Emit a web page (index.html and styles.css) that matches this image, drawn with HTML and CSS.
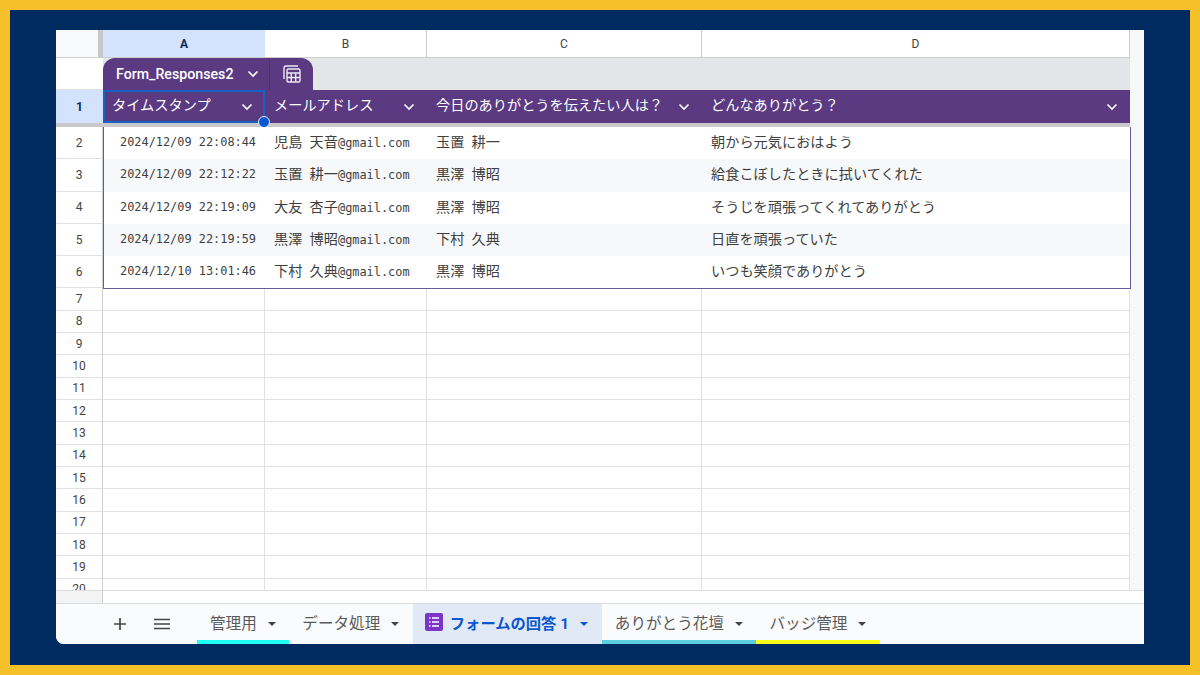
FILE: index.html
```html
<!DOCTYPE html>
<html lang="ja">
<head>
    <meta charset="UTF-8">
    <title>フォームの回答 1</title>
    <link rel="stylesheet" href="styles.css">
</head>
<body>

    <div class="frame">
        <div class="sheet">

            <div class="col-heads">
                <div class="corner"></div>
                <div class="col-head active">A</div>
                <div class="col-head">B</div>
                <div class="col-head">C</div>
                <div class="col-head">D</div>
            </div>

            <div class="table-tab-row">
                <div class="row-num blank"></div>
                <div class="table-tab">
                    <div class="table-name">
                        Form_Responses2
                        <svg class="chev" viewBox="0 0 12 8"><path d="M1.500 1.500 6 6l4.500-4.500"/></svg>
                    </div>
                    <div class="table-icon">
                        <svg viewBox="0 0 18 18" width="18" height="18">
                            <path d="M15 1H3a2 2 0 0 0-2 2v11"/>
                            <rect x="4" y="4" width="13" height="13" rx="1.500"/>
                            <path d="M4 8h13M8.300 8v9M12.700 8v9M4 12.500h13"/>
                        </svg>
                    </div>
                </div>
            </div>

            <div class="grid-row header-row">
                <div class="row-num current">1</div>
                <div class="th"><span class="th-label">タイムスタンプ</span><svg class="chev" viewBox="0 0 12 8"><path d="M1.500 1.500 6 6l4.500-4.500"/></svg></div>
                <div class="th"><span class="th-label">メールアドレス</span><svg class="chev" viewBox="0 0 12 8"><path d="M1.500 1.500 6 6l4.500-4.500"/></svg></div>
                <div class="th"><span class="th-label">今日のありがとうを伝えたい人は？</span><svg class="chev" viewBox="0 0 12 8"><path d="M1.500 1.500 6 6l4.500-4.500"/></svg></div>
                <div class="th"><span class="th-label">どんなありがとう？</span><svg class="chev" viewBox="0 0 12 8"><path d="M1.500 1.500 6 6l4.500-4.500"/></svg></div>
                <div class="selection"><span class="handle"></span></div>
            </div>
            <div class="freeze-line"></div>

            <div class="body-scroll">
                <div class="filled">
                    <div class="grid-row data-row">
                        <div class="row-num">2</div>
                        <div class="td date">2024/12/09 22:08:44</div>
                        <div class="td">児島&ensp;天音<span class="mono">@gmail.com</span></div>
                        <div class="td">玉置&ensp;耕一</div>
                        <div class="td">朝から元気におはよう</div>
                    </div>
                    <div class="grid-row data-row alt">
                        <div class="row-num">3</div>
                        <div class="td date">2024/12/09 22:12:22</div>
                        <div class="td">玉置&ensp;耕一<span class="mono">@gmail.com</span></div>
                        <div class="td">黒澤&ensp;博昭</div>
                        <div class="td">給食こぼしたときに拭いてくれた</div>
                    </div>
                    <div class="grid-row data-row">
                        <div class="row-num">4</div>
                        <div class="td date">2024/12/09 22:19:09</div>
                        <div class="td">大友&ensp;杏子<span class="mono">@gmail.com</span></div>
                        <div class="td">黒澤&ensp;博昭</div>
                        <div class="td">そうじを頑張ってくれてありがとう</div>
                    </div>
                    <div class="grid-row data-row alt">
                        <div class="row-num">5</div>
                        <div class="td date">2024/12/09 22:19:59</div>
                        <div class="td">黒澤&ensp;博昭<span class="mono">@gmail.com</span></div>
                        <div class="td">下村&ensp;久典</div>
                        <div class="td">日直を頑張っていた</div>
                    </div>
                    <div class="grid-row data-row">
                        <div class="row-num">6</div>
                        <div class="td date">2024/12/10 13:01:46</div>
                        <div class="td">下村&ensp;久典<span class="mono">@gmail.com</span></div>
                        <div class="td">黒澤&ensp;博昭</div>
                        <div class="td">いつも笑顔でありがとう</div>
                    </div>
                </div>

                <div class="grid-row empty"><div class="row-num">7</div><div class="td"></div><div class="td"></div><div class="td"></div><div class="td"></div></div>
                <div class="grid-row empty"><div class="row-num">8</div><div class="td"></div><div class="td"></div><div class="td"></div><div class="td"></div></div>
                <div class="grid-row empty"><div class="row-num">9</div><div class="td"></div><div class="td"></div><div class="td"></div><div class="td"></div></div>
                <div class="grid-row empty"><div class="row-num">10</div><div class="td"></div><div class="td"></div><div class="td"></div><div class="td"></div></div>
                <div class="grid-row empty"><div class="row-num">11</div><div class="td"></div><div class="td"></div><div class="td"></div><div class="td"></div></div>
                <div class="grid-row empty"><div class="row-num">12</div><div class="td"></div><div class="td"></div><div class="td"></div><div class="td"></div></div>
                <div class="grid-row empty"><div class="row-num">13</div><div class="td"></div><div class="td"></div><div class="td"></div><div class="td"></div></div>
                <div class="grid-row empty"><div class="row-num">14</div><div class="td"></div><div class="td"></div><div class="td"></div><div class="td"></div></div>
                <div class="grid-row empty"><div class="row-num">15</div><div class="td"></div><div class="td"></div><div class="td"></div><div class="td"></div></div>
                <div class="grid-row empty"><div class="row-num">16</div><div class="td"></div><div class="td"></div><div class="td"></div><div class="td"></div></div>
                <div class="grid-row empty"><div class="row-num">17</div><div class="td"></div><div class="td"></div><div class="td"></div><div class="td"></div></div>
                <div class="grid-row empty"><div class="row-num">18</div><div class="td"></div><div class="td"></div><div class="td"></div><div class="td"></div></div>
                <div class="grid-row empty"><div class="row-num">19</div><div class="td"></div><div class="td"></div><div class="td"></div><div class="td"></div></div>
                <div class="grid-row empty"><div class="row-num">20</div><div class="td"></div><div class="td"></div><div class="td"></div><div class="td"></div></div>
            </div>

            <div class="spacer-row"><div class="spacer-num"></div></div>

            <div class="tab-bar">
                <div class="bar-btn">
                    <svg viewBox="0 0 14 14" width="14" height="14"><path d="M7 1v12M1 7h12"/></svg>
                </div>
                <div class="bar-btn">
                    <svg viewBox="0 0 16 12" width="16" height="12"><path d="M0 1.500h16M0 6h16M0 10.500h16"/></svg>
                </div>
                <div class="tabs">
                    <div class="tab line-cyan">管理用<span class="caret"></span></div>
                    <div class="tab">データ処理<span class="caret"></span></div>
                    <div class="tab selected">
                        <svg class="form-icon" viewBox="0 0 18 18" width="18" height="18">
                            <rect width="18" height="18" rx="2" fill="#7c35c9"/>
                            <path d="M7 5h7M7 9h7M7 13h7M4 5h1.500M4 9h1.500M4 13h1.500" stroke="#fff" stroke-width="1.600"/>
                        </svg>
                        <span class="tab-label">フォームの回答 1</span><span class="caret"></span>
                    </div>
                    <div class="tab line-teal">ありがとう花壇<span class="caret"></span></div>
                    <div class="tab line-yellow">バッジ管理<span class="caret"></span></div>
                </div>
            </div>

        </div>
    </div>

</body>
</html>
```

FILE: styles.css
```css
* {
    box-sizing: border-box;
}

body {
    margin: 0;
    width: 1200px;
    height: 675px;
    overflow: hidden;
    font-family: "Roboto", "Noto Sans CJK JP", sans-serif;
    color: #444;
}

.frame {
    width: 1200px;
    height: 675px;
    padding: 20px 46px 21px;
    background-color: #002b60;
    border: 10px solid #f6c029;
}

.sheet {
    width: 1088px;
    height: 614px;
    display: flex;
    flex-direction: column;
    background-color: #f7f9f8;
    border-bottom-left-radius: 8px;
    overflow: hidden;
}

/* shared column widths, the last 14px is the empty strip on the right */
.col-heads,
.grid-row {
    display: grid;
    grid-template-columns: 47px 162px 162px 275px 428px 14px;
}

.col-heads {
    height: 28px;
}

.corner {
    background-color: #f8f9fa;
    border-right: 5px solid #c7c7c7;
    border-bottom: 1px solid #cfcfcf;
}

.col-head {
    display: flex;
    align-items: center;
    justify-content: center;
    font-size: 12px;
    color: #444;
    background-color: #fff;
    border-right: 1px solid #cfcfcf;
    border-bottom: 1px solid #cfcfcf;
}

.col-head.active {
    background-color: #d3e3fd;
    color: #0b2a58;
    font-weight: 700;
    border-right: none;
}

.table-tab-row {
    height: 32px;
    display: flex;
    background-color: #e4e5e9;
    margin-right: 14px;
}

.row-num {
    display: flex;
    align-items: center;
    justify-content: center;
    font-size: 12px;
    color: #444;
    background-color: #fff;
    border-right: 1px solid #cfcfcf;
    border-bottom: 1px solid #e1e1e1;
}

.row-num.blank {
    width: 47px;
    border-right: none;
}

.row-num.current {
    background-color: #d3e3fd;
    color: #0b2a58;
    font-weight: 700;
    border: none;
}

.table-tab {
    width: 210px;
    display: flex;
    background-color: #5b3a82;
    border-radius: 12px 12px 0 0;
    color: #fff;
}

.table-name {
    width: 167px;
    display: flex;
    align-items: center;
    padding-left: 13px;
    font-size: 14.200px;
    font-weight: 500;
    border-right: 1px solid #4e3172;
}

.table-name .chev {
    margin-left: 14px;
}

.table-icon {
    flex: 1;
    display: flex;
    align-items: center;
    justify-content: center;
}

.table-icon svg {
    fill: none;
    stroke: #eee9f4;
    stroke-width: 1.400;
}

.chev {
    width: 12px;
    height: 8px;
    flex: none;
    fill: none;
    stroke: #fff;
    stroke-width: 1.600;
}

.header-row {
    height: 33px;
    position: relative;
}

.th {
    display: flex;
    align-items: center;
    justify-content: space-between;
    padding: 0 12px 0 9px;
    background-color: #5b3a82;
    color: #fff;
    font-size: 14.200px;
}

.th-label {
    margin-top: -5px;
}

.selection {
    position: absolute;
    left: 47px;
    top: 0;
    width: 162px;
    height: 33px;
    border: 2px solid #1a5fc4;
}

.handle {
    position: absolute;
    right: -7px;
    bottom: -7px;
    width: 12px;
    height: 12px;
    border-radius: 50%;
    background-color: #0b57d0;
    border: 1px solid #e8eefb;
}

.freeze-line {
    height: 4px;
    background-color: #c9c9c9;
    margin-right: 14px;
}

.body-scroll {
    height: 463px;
    overflow: hidden;
}

.filled {
    position: relative;
}

/* the purple outline of the table sits on top of the rows */
.filled::after {
    content: "";
    position: absolute;
    left: 47px;
    top: 0;
    width: 1026px;
    height: 100%;
    border: 1px solid #6a5a98;
    border-top-width: 0;
    pointer-events: none;
}

.data-row {
    height: 32.300px;
}

.data-row .td {
    padding-left: 9px;
    line-height: 31px;
    background-color: #fff;
    font-size: 14.200px;
    color: #3f3f3f;
    white-space: pre;
}

.data-row.alt .td {
    background-color: #f6f8f9;
}

.data-row .td.date {
    font-family: "DejaVu Sans Mono", monospace;
    font-size: 11.900px;
    padding-left: 17px;
}

.mono {
    font-family: "DejaVu Sans Mono", monospace;
    font-size: 11.900px;
}

.empty {
    height: 22.330px;
}

.empty .td {
    background-color: #fff;
    border-right: 1px solid #e1e1e1;
    border-bottom: 1px solid #e1e1e1;
}

.spacer-row {
    height: 14px;
    background-color: #fff;
    border-top: 1px solid #dcdcdc;
    border-bottom: 1px solid #dadce0;
}

.spacer-num {
    width: 47px;
    height: 100%;
    background-color: #f3f3f3;
    border-right: 1px solid #cfcfcf;
}

.tab-bar {
    height: 40px;
    display: flex;
    padding-left: 43px;
    background-color: #f9fbfd;
}

.bar-btn {
    width: 42px;
    display: flex;
    align-items: center;
    justify-content: center;
}

.bar-btn svg {
    fill: none;
    stroke: #444;
    stroke-width: 1.700;
}

.tabs {
    display: flex;
    margin-left: 14px;
}

.tab {
    display: flex;
    align-items: center;
    padding: 0 13.500px 0 13px;
    font-size: 15.600px;
    color: #5a5a5a;
    border-bottom: 4px solid transparent;
}

.tab.selected {
    width: 189px;
    padding: 0 0 0 12px;
    background-color: #e1e9f7;
    color: #0b57d0;
    font-weight: 700;
    font-size: 15.300px;
}

.form-icon {
    margin-right: 7px;
}

.tab-label {
    white-space: pre;
}

.caret {
    width: 0;
    height: 0;
    margin: 3px 0 0 11px;
    border-left: 4px solid transparent;
    border-right: 4px solid transparent;
    border-top: 4px solid #444;
}

.tab.selected .caret {
    border-top-color: #0b57d0;
}

.line-cyan {
    border-bottom-color: #1ffff5;
}

.line-teal {
    border-bottom-color: #5bd0e0;
}

.line-yellow {
    border-bottom-color: #ffff19;
}
```
